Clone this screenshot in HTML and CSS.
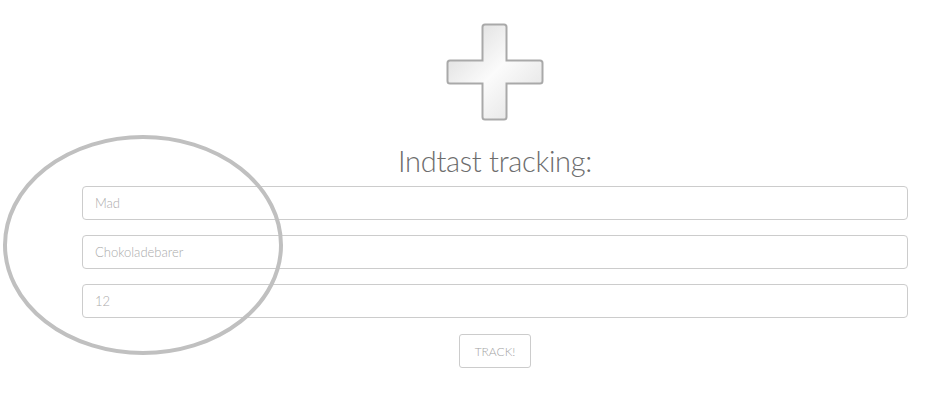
FILE: index.html
```html
<!DOCTYPE html>
<html lang="da">
<head>
<meta charset="utf-8">
<title>Indtast tracking</title>
<link rel="stylesheet" href="styles.css">
</head>
<body>
<div class="page">
  <div class="icon">
    <svg width="98" height="98" viewBox="0 0 98 98">
      <defs>
        <linearGradient id="g" x1="0" y1="0" x2="1" y2="1">
          <stop offset="0" stop-color="#d6d6d6"/>
          <stop offset="0.5" stop-color="#fbfbfb"/>
          <stop offset="1" stop-color="#dedede"/>
        </linearGradient>
      </defs>
      <path d="M39 1.5 H58 Q60.5 1.5 60.5 4 V37.5 H94 Q96.5 37.5 96.5 40 V58 Q96.5 60.5 94 60.5 H60.5 V94 Q60.5 96.5 58 96.5 H39 Q36.5 96.5 36.5 94 V60.5 H4 Q1.5 60.5 1.5 58 V40 Q1.5 37.5 4 37.5 H36.5 V4 Q36.5 1.5 39 1.5 Z" fill="url(#g)" stroke="#a9a9a9" stroke-width="2"/>
    </svg>
  </div>
  <h1 class="title">Indtast tracking:</h1>
  <form class="form">
    <input class="field" type="text" placeholder="Mad">
    <input class="field" type="text" placeholder="Chokoladebarer">
    <input class="field" type="text" placeholder="12">
    <button class="btn" type="button">TRACK!</button>
  </form>
  <svg class="circle" width="290" height="230" viewBox="0 0 290 230">
    <ellipse cx="143" cy="114" rx="138" ry="108" fill="none" stroke="#c0c0c0" stroke-width="4"/>
  </svg>
</div>
</body>
</html>
```

FILE: styles.css
```css
html, body {
  margin: 0;
  padding: 0;
  background: #ffffff;
}
body {
  font-family: Lato, "Open Sans", sans-serif;
  font-weight: 300;
}
.page {
  position: relative;
  width: 935px;
  height: 407px;
  box-sizing: border-box;
  padding: 23px 27px 0 82px;
  display: flex;
  flex-direction: column;
  align-items: center;
}
.icon {
  width: 98px;
  height: 98px;
  line-height: 0;
}
.title {
  margin: 20px 0 0 0;
  font-size: 29px;
  font-weight: 300;
  color: #6d6d6d;
  line-height: 40px;
  letter-spacing: -0.3px;
}
.form {
  width: 100%;
  margin-top: 5px;
  display: flex;
  flex-direction: column;
  align-items: center;
  gap: 15px;
}
.field {
  width: 100%;
  height: 34px;
  box-sizing: border-box;
  border: 1px solid #cccccc;
  border-radius: 4px;
  padding: 0 12px;
  font-family: Lato, "Open Sans", sans-serif;
  font-weight: 300;
  font-size: 13px;
  color: #555;
  background: #fff;
}
.field::placeholder {
  color: #ababab;
}
.btn {
  margin-top: 1px;
  width: 72px;
  height: 34px;
  border: 1px solid #cccccc;
  border-radius: 3px;
  background: #fff;
  color: #a3a3a3;
  font-family: Lato, "Open Sans", sans-serif;
  font-weight: 300;
  font-size: 12px;
  padding: 0;
}
.circle {
  position: absolute;
  left: 0;
  top: 131px;
}
```
